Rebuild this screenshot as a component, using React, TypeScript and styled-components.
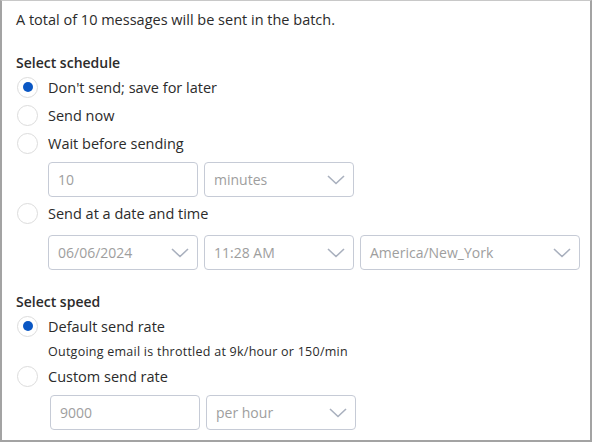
import React from "react";
import styled, { createGlobalStyle } from "styled-components";

const Global = createGlobalStyle`
  html, body { margin: 0; padding: 0; background: #fff; }
  body { font-family: "Open Sans", "Noto Sans", sans-serif; color: #2b2b2b; }
  * { box-sizing: border-box; }
`;

const Frame = styled.div`
  width: 592px;
  height: 442px;
  border: 2px solid #a3a3a3;
  border-top: 1px solid #c8c8c8;
  padding: 8px 0 0 14px;
  overflow: hidden;
`;

const Intro = styled.div`
  font-size: 14.5px;
  line-height: 22px;
  color: #2b2b2b;
`;

const Heading = styled.div<{ $top: number }>`
  margin-top: ${(p) => p.$top}px;
  font-size: 14px;
  font-weight: 600;
  line-height: 20px;
  color: #2b2b2b;
`;

const Option = styled.label`
  display: flex;
  align-items: center;
  gap: 10px;
  height: 28px;
  font-size: 14.5px;
  color: #2b2b2b;
  padding-left: 1px;
`;

const Circle = styled.span<{ $on: boolean }>`
  width: 21px;
  height: 21px;
  border-radius: 50%;
  border: 1px solid #dcdcdc;
  background: #fff;
  display: flex;
  align-items: center;
  justify-content: center;
  flex: none;
  &::after {
    content: "";
    display: ${(p) => (p.$on ? "block" : "none")};
    width: 10px;
    height: 10px;
    border-radius: 50%;
    background: #0a57c4;
  }
`;

const FieldRow = styled.div<{ $indent: number; $mt: number; $mb: number }>`
  display: flex;
  gap: 6px;
  margin: ${(p) => p.$mt}px 0 ${(p) => p.$mb}px ${(p) => p.$indent}px;
`;

const Box = styled.div<{ $w: number }>`
  width: ${(p) => p.$w}px;
  height: 35px;
  border: 1px solid #c6cbd6;
  border-radius: 4px;
  display: flex;
  align-items: center;
  justify-content: space-between;
  padding: 0 8px 0 9px;
  font-size: 14px;
  color: #9e9e9e;
`;

const Helper = styled.div`
  margin: 3px 0 1px 32px;
  font-size: 12.5px;
  line-height: 18px;
  letter-spacing: 0.25px;
  color: #2b2b2b;
`;

const Chevron = () => (
  <svg width="18" height="10" viewBox="0 0 18 10" fill="none">
    <path d="M1 1l8 7.5L17 1" stroke="#a9b0be" strokeWidth="1.6" />
  </svg>
);

const Radio = ({ on, label }: { on?: boolean; label: string }) => (
  <Option>
    <Circle $on={!!on} />
    {label}
  </Option>
);

const Field = ({ w, value, select }: { w: number; value: string; select?: boolean }) => (
  <Box $w={w}>
    <span>{value}</span>
    {select && <Chevron />}
  </Box>
);

export default function App() {
  return (
    <Frame>
      <Global />
      <Intro>A total of 10 messages will be sent in the batch.</Intro>
      <Heading $top={22}>Select schedule</Heading>
      <Radio on label="Don't send; save for later" />
      <Radio label="Send now" />
      <Radio label="Wait before sending" />
      <FieldRow $indent={32} $mt={5} $mb={2}>
        <Field w={150} value="10" />
        <Field w={150} value="minutes" select />
      </FieldRow>
      <Radio label="Send at a date and time" />
      <FieldRow $indent={32} $mt={8} $mb={0}>
        <Field w={150} value="06/06/2024" select />
        <Field w={150} value="11:28 AM" select />
        <Field w={220} value="America/New_York" select />
      </FieldRow>
      <Heading $top={22}>Select speed</Heading>
      <Radio on label="Default send rate" />
      <Helper>Outgoing email is throttled at 9k/hour or 150/min</Helper>
      <Radio label="Custom send rate" />
      <FieldRow $indent={34} $mt={5} $mb={0}>
        <Field w={150} value="9000" />
        <Field w={150} value="per hour" select />
      </FieldRow>
    </Frame>
  );
}
